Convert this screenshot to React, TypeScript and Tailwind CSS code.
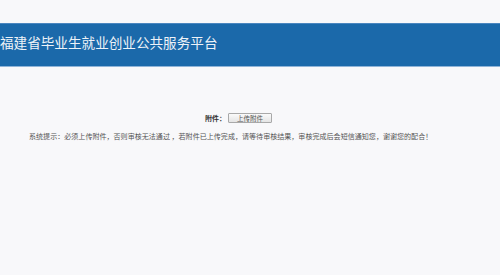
import React from "react";

export default function App() {
  const font = { fontFamily: '"Noto Sans CJK SC", "Liberation Sans", sans-serif' };
  return (
    <div className="w-[500px] h-[275px] bg-[#f8f8fa] overflow-hidden" style={font}>
      <div className="h-[23px]" />
      <div className="h-[44px] bg-[#1b69aa] border-t border-t-[#4a86bf] border-b border-b-[#8fb4d8] flex items-start pt-[9px]">
        <span className="text-[13.6px] leading-[18px] text-[#eef3f8] whitespace-nowrap">
          福建省毕业生就业创业公共服务平台
        </span>
      </div>
      <div className="h-[46px]" />
      <div className="flex items-center pl-[205px] h-[10px]">
        <span className="text-[7px] leading-[10px] text-[#333] font-bold">附件：</span>
        <button className="ml-[2px] w-[44px] h-[10px] border border-[#a9a9a9] rounded-[1px] bg-gradient-to-b from-[#fafafa] to-[#e4e4e4] text-[6.5px] leading-[8px] text-[#555] flex items-center justify-center">
          上传附件
        </button>
      </div>
      <div className="h-[8px]" />
      <div className="pl-[29px] text-[7.05px] leading-[10px] text-[#555] whitespace-nowrap">
        系统提示：必须上传附件，否则审核无法通过 ，若附件已上传完成，请等待审核结果，审核完成后会短信通知您，谢谢您的配合！
      </div>
    </div>
  );
}
